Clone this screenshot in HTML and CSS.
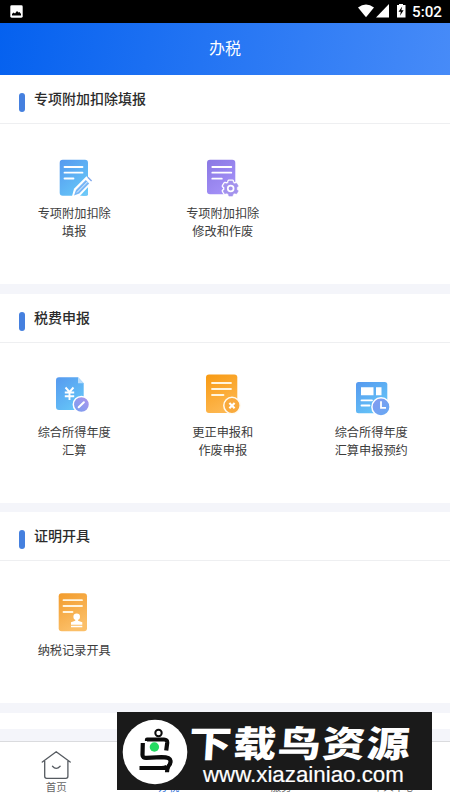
FILE: index.html
```html
<!DOCTYPE html>
<html lang="zh-CN">
<head>
<meta charset="utf-8">
<title>办税</title>
<link rel="stylesheet" href="styles.css">
</head>
<body>
<svg class="defs" width="0" height="0" aria-hidden="true">
  <defs>
    <linearGradient id="blue" x1="0" y1="0" x2=".7" y2="1"><stop offset="0" stop-color="#5699ef"/><stop offset="1" stop-color="#65c6f8"/></linearGradient>
    <linearGradient id="purple" x1="0" y1="0" x2=".6" y2="1"><stop offset="0" stop-color="#8a78e3"/><stop offset="1" stop-color="#a491f8"/></linearGradient>
    <linearGradient id="orange" x1="0" y1="0" x2=".4" y2="1"><stop offset="0" stop-color="#f89a12"/><stop offset="1" stop-color="#fdb750"/></linearGradient>
    <linearGradient id="amber" x1="0" y1="0" x2=".4" y2="1"><stop offset="0" stop-color="#f29b2b"/><stop offset="1" stop-color="#fbbf68"/></linearGradient>
    <linearGradient id="violet" x1="0" y1="1" x2="1" y2="0"><stop offset="0" stop-color="#729ff0"/><stop offset="1" stop-color="#b194ec"/></linearGradient>
    <linearGradient id="clock" x1="0" y1="0" x2="1" y2="1"><stop offset="0" stop-color="#889aef"/><stop offset="1" stop-color="#61a9f4"/></linearGradient>
  </defs>
</svg>
<div class="screen">
  <div class="status">
    <svg class="picture" width="13" height="13" viewBox="0 0 13 13"><rect x=".3" y=".3" width="12.4" height="12.4" rx="1.4" fill="#fff"/><path d="M2 10.500v-1.500l1.500-1.500 1.500 1 2-2.500 1.500 1.500 1-.5 1.500 2v1.500z" fill="#000"/></svg>
    <div class="status-right">
      <svg width="50" height="16" viewBox="357 3 50 16" fill="#fff"><path d="M358 7.600Q366 1.500 374 7.600L366 17.300z"/><path d="M389 4v13.500h-13z"/><path d="M397 5h2V4h4v1h2.500v12.500H397z"/><path d="M402.200 6.500l-3.700 5.200h2.300l-.8 4 3.600-5.500h-2.300z" fill="#000"/></svg>
      <span>5:02</span>
    </div>
  </div>
  <header class="topbar">办税</header>

  <section class="card">
    <h2>专项附加扣除填报</h2>
    <div class="grid">
      <div class="item">
        <svg viewBox="50 153 48 50"><rect x="59.700" y="159.800" width="28.300" height="36" rx="3" fill="url(#blue)"/><path d="M64.500 167h18M64.500 172.700h18M64.500 178.500h9" class="lines"/><path d="M71.800 197l2.200-8.300 12.500-12.500 6 6-13.500 14.800z" fill="#fff"/><path d="M74 195.500l2-5.500 9.800-9.900 3.400 3.400-9.900 9.900z" fill="#79b7f6"/><path d="M77 192.500l10.300-10.500" stroke="#fff" stroke-width=".8"/><path d="M87.300 177.800l1-1 3.800 3.800-1 1z" fill="#82a9ec"/><path d="M82 195.800h4.500q1.500 0 1.500-1.500V190z" fill="#70c8f8"/></svg>
        <p>专项附加扣除<br>填报</p>
      </div>
      <div class="item">
        <svg viewBox="199 153 48 50"><rect x="207" y="159.800" width="28.300" height="34.500" rx="3" fill="url(#purple)"/><path d="M212.300 167h19M212.300 172.700h19M212.300 178.700h9.500" class="lines"/><g transform="translate(0 -.3)" fill="#a392ed" stroke-linejoin="round"><path d="M228.900 181.200h3.600l.6 2 1.500.9 2-.6 1.700 2.900-1.500 1.500v1.800l1.500 1.500-1.700 2.900-2-.6-1.500.9-.6 2h-3.600l-.6-2-1.500-.9-2 .6-1.700-2.900 1.500-1.500v-1.800l-1.500-1.500 1.700-2.900 2 .6 1.500-.9z" stroke="#fff" stroke-width="3"/><path d="M228.900 181.200h3.600l.6 2 1.500.9 2-.6 1.700 2.900-1.500 1.500v1.800l1.500 1.500-1.700 2.900-2-.6-1.500.9-.6 2h-3.600l-.6-2-1.500-.9-2 .6-1.700-2.900 1.500-1.500v-1.800l-1.500-1.500 1.700-2.900 2 .6 1.500-.9z" stroke="#a392ed" stroke-width=".5"/><circle cx="230.700" cy="188.800" r="2.900" stroke="#fff" stroke-width="1.700"/></g></svg>
        <p>专项附加扣除<br>修改和作废</p>
      </div>
    </div>
  </section>

  <section class="card">
    <h2>税费申报</h2>
    <div class="grid">
      <div class="item">
        <svg viewBox="50 372 48 50"><path d="M59 377.300h19l5.700 6V407a3 3 0 0 1-3 3H59a3 3 0 0 1-3-3v-26.700a3 3 0 0 1 3-3z" fill="url(#blue)"/><path d="M78 377.300v6h5.700z" fill="#b9ddfb"/><path d="M65.500 387.500l4 4.500 4-4.500M69.500 392v8M64.800 392.500h9.400M64.800 396.200h9.400" fill="none" stroke="#fff" stroke-width="1.900"/><circle cx="81.400" cy="404.500" r="8.100" fill="url(#violet)" stroke="#fff" stroke-width="1.500"/><path d="M78.700 407.200l5.200-5" stroke="#fff" stroke-width="2" stroke-linecap="round"/></svg>
        <p>综合所得年度<br>汇算</p>
      </div>
      <div class="item">
        <svg viewBox="199 372 48 50"><rect x="206" y="374.500" width="31.300" height="38.600" rx="3" fill="url(#orange)"/><path d="M212 383h19M212 389h19M212 395h11.500" class="lines cream"/><circle cx="232" cy="405.500" r="8.200" fill="#f9aa3d" stroke="#fffaf0" stroke-width="1.500"/><path d="M229.400 403l5.200 5.200M234.600 403l-5.200 5.200" stroke="#fff" stroke-width="2.200"/></svg>
        <p>更正申报和<br>作废申报</p>
      </div>
      <div class="item">
        <svg viewBox="347 372 48 50"><rect x="356" y="382" width="31.300" height="31.300" rx="2.500" fill="url(#blue)"/><path d="M361 387.300h12.500v8H361zM376 387.300h5.500v8H376z" fill="#fff"/><path d="M361.500 400.400h10.500M361.500 405.500h8" class="lines"/><circle cx="381" cy="406.900" r="9.100" fill="url(#clock)" stroke="#fff" stroke-width="1.500"/><path d="M381 401.300v6.500h5" fill="none" stroke="#fff" stroke-width="1.800"/></svg>
        <p>综合所得年度<br>汇算申报预约</p>
      </div>
    </div>
  </section>

  <section class="card short">
    <h2>证明开具</h2>
    <div class="grid">
      <div class="item">
        <svg viewBox="50 591 48 50"><rect x="58.700" y="594.300" width="28.300" height="38" rx="3" fill="url(#amber)"/><path d="M63.500 601.200h18.500M63.500 607h18.500M63.500 613h9" class="lines cream"/><circle cx="76.700" cy="617.800" r="3.300" fill="#fff"/><path d="M75.300 619h2.800v2.700l4.200 1.600v2.400H71v-2.400l4.300-1.600zM71 626.800h11.300v1.500H71z" fill="#fff"/></svg>
        <p>纳税记录开具</p>
      </div>
    </div>
  </section>

  <div class="next-card"></div>

  <nav class="tabs">
    <div class="tab"><svg width="30" height="30" viewBox="41 750 30 30" fill="none" stroke="#555a60" stroke-width="1.300" stroke-linecap="round" stroke-linejoin="round"><path d="M42.300 762L56.200 751.700 70.200 762M44.700 761v15.300a2 2 0 0 0 2 2h19.200a2 2 0 0 0 2-2V761M52.500 766.300q3.700 4.200 7.600 0"/></svg><span>首页</span></div>
    <div class="tab active"><span>办税</span></div>
    <div class="tab"><span>服务</span></div>
    <div class="tab"><span>个人中心</span></div>
  </nav>

  <div class="banner">
    <svg class="bird" width="66" height="66" viewBox="0 0 66 66"><circle cx="33" cy="33" r="32.300" fill="#fff"/><g fill="none" stroke="#0b0b0b" stroke-width="4.200" stroke-linejoin="round"><circle cx="36.500" cy="14" r="3.200" stroke-width="2"/><path d="M25 22v-1.500h17q3.500 0 3.200 3.500l-1 7.500M20.800 24l-.3 12q0 3 4 2.800l15-.6q8.500 0 9 3.500.3 3-2 5.500-1.500 2-1.500 6M17.500 49h22q4 0 5.500-1.500"/></g><circle cx="32.400" cy="28" r="4.700" fill="#24db62"/></svg>
    <div class="banner-text">
      <strong>下载鸟资源</strong>
      <span>www.xiazainiao.com</span>
    </div>
  </div>
</div>
</body>
</html>
```
FILE: styles.css
```css
* { box-sizing: border-box; }
body { margin: 0; font-family: Roboto, "Noto Sans CJK SC", sans-serif; color: #333; }
.defs { position: absolute; }
.screen { position: relative; width: 450px; height: 800px; overflow: hidden; display: flex; flex-direction: column; background: #f4f5fa; }
.status { flex: none; height: 22.5px; background: #000; display: flex; justify-content: space-between; align-items: center; padding: 0 8px 0 10px; color: #fff; }
.status svg { display: block; }
.status-right { display: flex; align-items: center; gap: 5px; line-height: 22px; font-weight: 500; }
.status-right span { width: 30px; white-space: nowrap; font-size: 15.200px; padding-top: 1px; }
.topbar { flex: none; height: 52.500px; background: linear-gradient(100deg, #0561ef, #478bf8); color: #fff; text-align: center; font-size: 16px; line-height: 52px; }
.card { flex: none; height: 209px; margin-bottom: 9.500px; background: #fff; }
.card.short { height: 191px; }
h2 { margin: 0; height: 49px; padding-left: 19px; border-bottom: 1px solid #eeeff1; display: flex; align-items: center; gap: 9px; font-size: 14px; line-height: 48px; font-weight: 500; color: #2b2b2b; }
h2::before { content: ""; width: 6px; height: 19px; margin-top: 7px; border-radius: 3px; background: #4580df; }
.grid { display: grid; grid-template-columns: repeat(3, 148.500px); padding-top: 29px; }
.item { display: flex; flex-direction: column; align-items: center; }
.item svg { display: block; width: 48px; height: 50px; }
.item p { margin: 2px 0 0; text-align: center; font-size: 12.200px; line-height: 18px; color: #3c3c3c; }
.lines { fill: none; stroke: #fff; stroke-width: 1.800; stroke-linecap: round; }
.cream { stroke: #fff5df; }
.next-card { flex: none; height: 16.500px; margin-bottom: 12px; background: #fff; }
.tabs { flex: 1; display: grid; grid-template-columns: repeat(4, 112.500px); background: #fff; border-top: 1px solid #dadbde; }
.tab { display: flex; flex-direction: column; align-items: center; justify-content: flex-end; padding-bottom: 5px; font-size: 10.500px; line-height: 14px; color: #666; }
.tab svg { display: block; margin-bottom: 1px; }
.tab.active { color: #3375d8; }
.banner { position: absolute; left: 117px; top: 712px; width: 315px; height: 78px; background: #1a1a1a; display: flex; align-items: flex-start; padding: 7px 0 0 5px; color: #fff; }
.bird { flex: none; }
.banner-text { display: flex; flex-direction: column; margin-left: 1px; }
.banner strong { font-family: "Noto Sans CJK SC", sans-serif; font-size: 43px; line-height: 44px; height: 44px; font-weight: 900; letter-spacing: 1.500px; white-space: nowrap; transform: scaleY(.84) skewX(-3deg); }
.banner span { font-family: "Liberation Sans", sans-serif; font-size: 22.300px; line-height: 24px; margin: 0 0 0 14px; -webkit-text-stroke: .2px #fff; }
```
